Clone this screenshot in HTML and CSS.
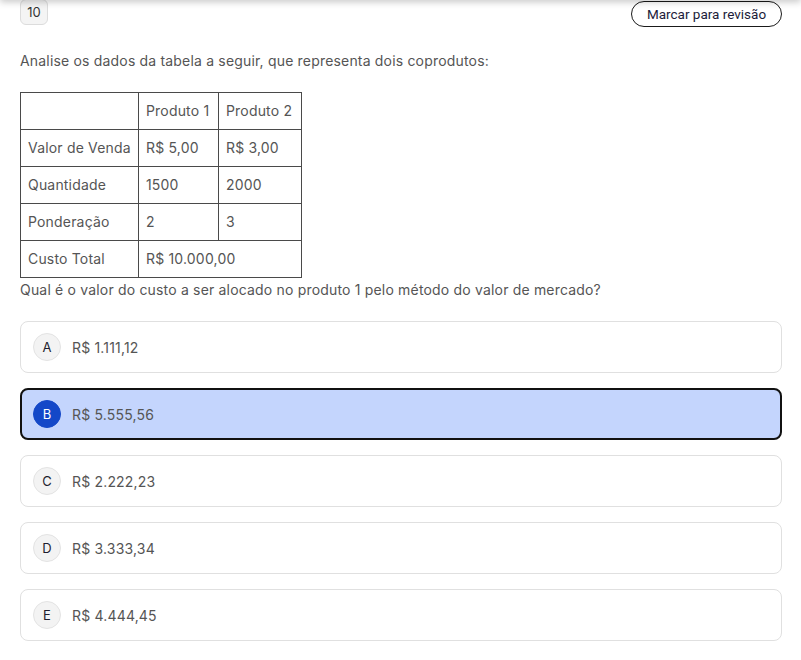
FILE: index.html
```html
<!DOCTYPE html>
<html lang="pt-BR">
<head>
<meta charset="utf-8">
<title>Questão 10</title>
<link rel="stylesheet" href="styles.css">
</head>
<body>
<div class="top-shadow"></div>
<main class="page">
  <header class="head">
    <span class="badge">10</span>
    <button class="review">Marcar para revisão</button>
  </header>
  <p class="intro">Analise os dados da tabela a seguir, que representa dois coprodutos:</p>
  <table class="data">
    <colgroup><col class="w1"><col class="w2"><col class="w3"></colgroup>
    <tr><td></td><td>Produto 1</td><td>Produto 2</td></tr>
    <tr><td>Valor de Venda</td><td>R$ 5,00</td><td>R$ 3,00</td></tr>
    <tr><td>Quantidade</td><td>1500</td><td>2000</td></tr>
    <tr><td>Ponderação</td><td>2</td><td>3</td></tr>
    <tr><td>Custo Total</td><td colspan="2">R$ 10.000,00</td></tr>
  </table>
  <p class="question">Qual é o valor do custo a ser alocado no produto 1 pelo método do valor de mercado?</p>
  <ul class="options">
    <li class="opt"><span class="letter">A</span><span class="val">R$ 1.111,12</span></li>
    <li class="opt selected"><span class="letter">B</span><span class="val">R$ 5.555,56</span></li>
    <li class="opt"><span class="letter">C</span><span class="val">R$ 2.222,23</span></li>
    <li class="opt"><span class="letter">D</span><span class="val">R$ 3.333,34</span></li>
    <li class="opt"><span class="letter">E</span><span class="val">R$ 4.444,45</span></li>
  </ul>
</main>
</body>
</html>
```

FILE: styles.css
```css
html, body {
  margin: 0;
  padding: 0;
  background: #ffffff;
}
body {
  font-family: Inter, "Noto Sans", sans-serif;
  color: #555555;
  font-size: 14px;
  letter-spacing: 0.18px;
}
.top-shadow {
  position: fixed;
  top: -12px;
  left: 0;
  right: 0;
  height: 12px;
  box-shadow: 0 2px 7px rgba(0, 0, 0, 0.22);
  background: #fff;
  z-index: 5;
}
.page {
  padding: 0 19px 0 20px;
}
.head {
  display: flex;
  justify-content: space-between;
  align-items: flex-start;
  height: 27px;
}
.badge {
  box-sizing: border-box;
  width: 28px;
  height: 26px;
  margin-top: -1px;
  display: flex;
  align-items: center;
  justify-content: center;
  background: #f4f4f4;
  border: 1px solid #dcdcdc;
  border-radius: 6px;
  font-size: 13px;
  letter-spacing: 0;
  color: #333;
}
.review {
  box-sizing: border-box;
  width: 151px;
  height: 26px;
  margin-top: 1px;
  border: 1px solid #1a1a1a;
  border-radius: 13px;
  background: #fff;
  font-family: Roboto, "Liberation Sans", sans-serif;
  font-size: 13.5px;
  letter-spacing: 0;
  color: #1c1c3a;
  padding: 0;
  cursor: pointer;
}
.intro {
  margin: 24px 0 0 0;
  line-height: 20px;
}
.data {
  border-collapse: collapse;
  table-layout: fixed;
  width: 281px;
  margin-top: 21px;
  color: #555;
}
.data .w1 { width: 118px; }
.data .w2 { width: 80px; }
.data .w3 { width: 83px; }
.data td {
  border: 1px solid #4a4a4a;
  padding: 8px 0 8px 7px;
  line-height: 20px;
  height: 20px;
  white-space: nowrap;
  overflow: visible;
  text-align: left;
}
.question {
  margin: 1px 0 0 0;
  line-height: 22px;
}
.options {
  list-style: none;
  margin: 20px 0 0 0;
  padding: 0;
  display: flex;
  flex-direction: column;
  gap: 15px;
}
.opt {
  box-sizing: border-box;
  height: 52px;
  border: 1px solid #e0e0e0;
  border-radius: 8px;
  display: flex;
  align-items: center;
  padding-left: 12px;
  gap: 11px;
}
.letter {
  box-sizing: border-box;
  width: 28px;
  height: 28px;
  border-radius: 50%;
  background: #f3f3f3;
  border: 1px solid #e3e3e3;
  display: flex;
  align-items: center;
  justify-content: center;
  font-size: 13px;
  letter-spacing: 0;
  color: #1e1e2e;
}
.val {
  color: #555;
  font-size: 14px;
}
.opt.selected {
  background: #c4d5fd;
  border: 2px solid #111111;
  padding-left: 11px;
}
.opt.selected .letter {
  background: #1448c8;
  border-color: #1448c8;
  color: #fff;
}
```
